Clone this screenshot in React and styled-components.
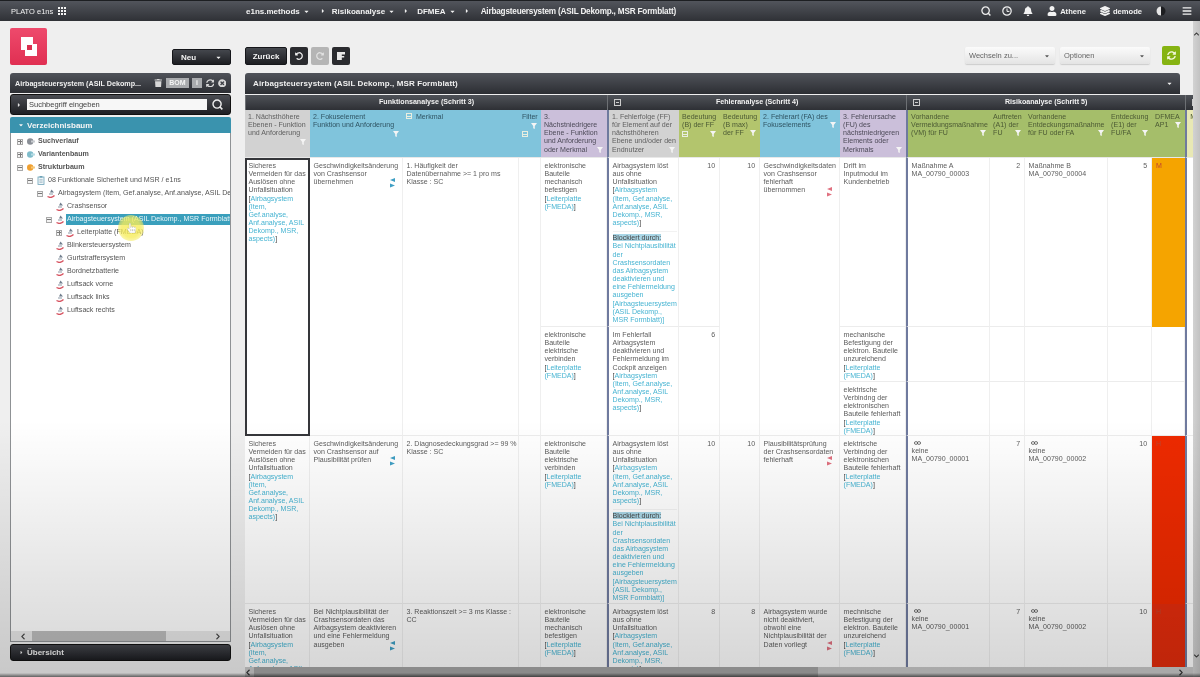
import React from 'react';
import styled, { createGlobalStyle } from 'styled-components';
import {
  FaBars, FaBell, FaCaretDown, FaCaretRight, FaChevronDown, FaChevronLeft, FaChevronRight, FaChevronUp,
  FaHandPointer, FaLayerGroup, FaRedoAlt, FaSyncAlt, FaTimesCircle, FaTrash, FaUndoAlt, FaUser,
} from 'react-icons/fa';

const GlobalStyle = createGlobalStyle`
  html, body { margin: 0; padding: 0; background: #eee; }
  body { font-family: "Liberation Sans", Arial, sans-serif; overflow: hidden; }
  * { box-sizing: border-box; }
`;

const darkGradient = 'linear-gradient(#50535a, #2c2e33)';

const Page = styled.div`
  position: relative;
  width: 1200px;
  height: 677px;
  overflow: hidden;
  display: flex;
  flex-direction: column;
  background: #efefef;
  filter: blur(0.35px);
  &::after {
    content: '';
    position: absolute;
    inset: 0;
    pointer-events: none;
    background: linear-gradient(transparent 62%, rgba(0, 0, 0, 0.16) 99.4%, rgba(0, 0, 0, 0.6) 100%);
  }
`;

/* top bar */
const TopBar = styled.header`
  height: 21px;
  flex: none;
  display: flex;
  align-items: center;
  padding: 0 8px 0 11px;
  border-top: 1px solid #1d1f22;
  background: linear-gradient(#52555c, #2f3136);
  color: #f2f2f2;
  font-size: 8px;
`;

const Brand = styled.div`
  display: flex;
  align-items: center;
  gap: 5px;
  width: 235px;
  font-size: 7.5px;
`;

const AppGrid = styled.span`
  display: grid;
  grid-template-columns: repeat(3, 2px);
  gap: 1px;
  i { height: 2px; background: #f4f4f4; }
`;

const Crumbs = styled.nav`
  display: flex;
  align-items: center;
  font-weight: bold;
  flex: 1;
`;

const Crumb = styled.span`
  display: flex;
  align-items: center;
  gap: 3px;
  margin-right: ${(p) => p.$gap}px;
  svg { width: 7px; height: 7px; }
`;

const CrumbSep = styled(FaCaretRight)`
  width: 6px;
  height: 6px;
  margin-right: ${(p) => p.$gap}px;
`;

const CrumbTitle = styled.span`
  font-size: 8.2px;
  letter-spacing: -0.19px;
`;

const TopIcons = styled.div`
  display: flex;
  align-items: center;
  font-weight: bold;
  font-size: 7.6px;
  svg { width: 10px; height: 10px; }
`;

const TopIcon = styled.span`
  display: flex;
  align-items: center;
  gap: 3px;
  margin-right: ${(p) => p.$gap}px;
`;

const Body = styled.div`
  flex: 1;
  display: flex;
  min-height: 0;
`;

const Content = styled.div`
  flex: 1;
  display: grid;
  grid-template-columns: 221px 948px;
  column-gap: 14px;
  padding-left: 10px;
  min-width: 0;
`;

const Column = styled.div`
  display: flex;
  flex-direction: column;
  min-width: 0;
`;

const Toolbar = styled.div`
  height: 52px;
  flex: none;
  display: flex;
  align-items: flex-end;
  justify-content: space-between;
  padding-bottom: 8px;
`;

const Logo = styled.svg`
  width: 37px;
  height: 37px;
  display: block;
`;

const DarkButton = styled.button`
  height: ${(p) => p.$h || 18}px;
  width: ${(p) => p.$w}px;
  display: flex;
  align-items: center;
  justify-content: ${(p) => (p.$between ? 'space-between' : 'center')};
  padding: ${(p) => (p.$between ? '0 8px' : '0')};
  border: 1px solid #15161a;
  border-radius: 2px;
  background: linear-gradient(#44474d, #1d1e22);
  color: #f4f4f4;
  font: bold 8px "Liberation Sans", Arial, sans-serif;
  svg { width: 7px; height: 7px; }
`;

const IconButton = styled.button`
  width: 18px;
  height: 18px;
  padding: 0;
  display: flex;
  align-items: center;
  justify-content: center;
  border: 0;
  border-radius: 2px;
  background: ${(p) => (p.$off ? '#b5b5b5' : '#2a2b2f')};
  color: ${(p) => (p.$off ? '#e2e2e2' : '#f2f2f2')};
  svg { width: 8px; height: 8px; }
`;

const ToolGroup = styled.div`
  display: flex;
  align-items: flex-end;
  gap: ${(p) => p.$gap}px;
  margin-right: ${(p) => p.$end || 0}px;
`;

const Dropdown = styled.div`
  width: 90px;
  height: 17px;
  display: flex;
  align-items: center;
  justify-content: space-between;
  padding: 0 5px 0 4px;
  margin-bottom: 1px;
  border-radius: 2px;
  background: linear-gradient(#fbfbfb, #e4e4e4);
  box-shadow: 0 1px 1px #ccc;
  color: #666;
  font-size: 7.5px;
  svg { width: 6px; height: 6px; color: #555; }
`;

const GreenButton = styled.button`
  width: 18px;
  height: 19px;
  margin-left: 7px;
  padding: 0;
  border: 0;
  border-radius: 2px;
  display: flex;
  align-items: center;
  justify-content: center;
  background: #86b312;
  color: #f4f8dc;
  svg { width: 9px; height: 9px; }
`;

/* left column */
const PanelHead = styled.div`
  height: ${(p) => p.$h}px;
  flex: none;
  display: flex;
  align-items: center;
  justify-content: space-between;
  padding: 0 5px;
  border-radius: 3px 3px 0 0;
  background: ${darkGradient};
  color: #f0f0f0;
  font-size: ${(p) => p.$size}px;
  font-weight: bold;
`;

const HeadTools = styled.div`
  display: flex;
  align-items: center;
  gap: 3.5px;
  svg { width: 8.5px; height: 8.5px; color: #d8d8d8; }
`;

const Tag = styled.span`
  display: inline-block;
  padding: 0 ${(p) => p.$pad}px;
  height: 10px;
  line-height: 10px;
  background: #a9abae;
  color: #f4f4f4;
  font-size: 7px;
`;

const SearchBar = styled.div`
  height: 21px;
  flex: none;
  margin-top: 1px;
  display: flex;
  align-items: center;
  padding: 0 7px 0 5px;
  gap: 5px;
  border-radius: 3px;
  border: 1px solid #111;
  background: linear-gradient(#4a4c52, #1f2024);
  color: #ddd;
  > svg:first-child { width: 6px; height: 6px; flex: none; }
`;

const SearchInput = styled.div`
  flex: 1;
  height: 11px;
  line-height: 11px;
  padding-left: 2px;
  background: #f7f7f7;
  color: #444;
  font-size: 7.5px;
`;

const Magnifier = styled.svg`
  width: ${(p) => p.$size}px;
  height: ${(p) => p.$size}px;
  flex: none;
`;

const TreeHead = styled.div`
  height: 16px;
  flex: none;
  margin-top: 2px;
  display: flex;
  align-items: center;
  gap: 3px;
  padding-left: 8px;
  border-radius: 2px 2px 0 0;
  background: #3a93ae;
  color: #f5f5f5;
  font-size: 8px;
  font-weight: bold;
  svg { width: 6px; height: 6px; }
`;

const Tree = styled.div`
  position: relative;
  height: 509px;
  flex: none;
  overflow: hidden;
  padding-top: 2px;
  border: 1px solid #8f9295;
  border-top: 0;
  background: #fff;
`;

const TreeRow = styled.div`
  height: 13px;
  display: flex;
  align-items: center;
  white-space: nowrap;
  padding-left: ${(p) => p.$indent}px;
  color: #555;
  font-size: 7.1px;
  font-weight: ${(p) => (p.$bold ? 'bold' : 'normal')};
`;

const Expander = styled.span`
  width: 6px;
  height: 6px;
  flex: none;
  margin-right: 4px;
  border: 1px solid #aaa;
  position: relative;
  background: #f3f3f3;
  &::before { content: ''; position: absolute; left: 0; right: 0; top: 1.5px; height: 1px; background: #777; }
  &::after {
    content: '';
    display: ${(p) => (p.$open ? 'none' : 'block')};
    position: absolute; top: 0; bottom: 0; left: 1.5px; width: 1px; background: #777;
  }
`;

const TreeIcon = styled.svg`
  width: 8px;
  height: 9px;
  flex: none;
  margin-right: 2px;
`;

const TreeLabel = styled.span`
  display: block;
  padding-left: 1px;
  flex: ${(p) => (p.$selected ? 1 : 'none')};
  height: 11px;
  line-height: 11px;
  overflow: hidden;
  background: ${(p) => (p.$selected ? '#3a9fbc' : 'transparent')};
  color: ${(p) => (p.$selected ? '#e9f5f8' : 'inherit')};
`;

const CursorMark = styled.div`
  position: absolute;
  left: 107px;
  top: 82px;
  width: 26px;
  height: 26px;
  display: flex;
  align-items: center;
  justify-content: center;
  border-radius: 50%;
  background: radial-gradient(rgba(246, 236, 90, 0.8) 50%, rgba(246, 236, 90, 0.1));
  color: #fff;
  svg { width: 9px; height: 10px; stroke: #777; stroke-width: 10px; }
`;

const TreeScroll = styled.div`
  position: absolute;
  left: 0;
  right: 0;
  bottom: 0;
  height: 10px;
  display: flex;
  align-items: center;
  justify-content: space-between;
  padding: 0 9px;
  background: #e8e8e8;
  color: #444;
  svg { width: 6px; height: 7px; }
`;

const TreeThumb = styled.div`
  position: absolute;
  left: 21px;
  width: 134px;
  top: 0;
  bottom: 0;
  background: #bcbcbc;
`;

const Overview = styled.div`
  height: 17px;
  flex: none;
  margin-top: 2px;
  display: flex;
  align-items: center;
  gap: 3px;
  padding-left: 8px;
  border-radius: 3px;
  border: 1px solid #111;
  background: linear-gradient(#45474d, #1c1d21);
  color: #f0f0f0;
  font-size: 8px;
  font-weight: bold;
  svg { width: 5px; height: 5px; }
`;

/* right column */
const MainHead = styled(PanelHead)`
  width: 935px;
  padding: 0 7px 0 8px;
  letter-spacing: 0.1px;
  svg { width: 7px; height: 7px; }
`;

const TableArea = styled.div`
  height: 572px;
  flex: none;
  margin-top: 1px;
  overflow: hidden;
`;

const Sheet = styled.table`
  width: 1000px;
  table-layout: fixed;
  border-collapse: separate;
  border-spacing: 0;
  font-size: 7.05px;
  line-height: 8.15px;
  color: #5c5c5c;
`;

const GroupCell = styled.th`
  height: 15px;
  position: relative;
  padding: 0;
  background: linear-gradient(#4f5258, #2e3035);
  border-left: 1px solid #6d7074;
  color: #f2f2f2;
  font-size: 7.1px;
  font-weight: bold;
  text-align: center;
`;

const GroupToggle = styled.span`
  position: absolute;
  left: 6px;
  top: 4px;
  width: 7px;
  height: 7px;
  border: 1px solid #ccc;
  &::before { content: ''; position: absolute; left: 1px; right: 1px; top: 2px; height: 1px; background: #ccc; }
`;

const headColors = {
  grey: '#d2d2d2',
  blue: '#80c4dc',
  violet: '#cbbfda',
  green: '#b3c56d',
  risk: '#a5be6a',
  pale: '#e8e8b4',
};

const headText = {
  grey: '#5f5f5f',
  blue: '#2f5463',
  violet: '#4d4a58',
  green: '#4c5a34',
  risk: '#4c5a34',
  pale: '#4c5a34',
};

const HeadCell = styled.th`
  height: 48px;
  padding: 3px 1px 0 3px;
  vertical-align: top;
  overflow: hidden;
  font-weight: normal;
  text-align: left;
  background: ${(p) => headColors[p.$tone]};
  border-bottom: 1px solid #e8e8e8;
  border-left: ${(p) => (p.$group ? '2px solid #6f7a9e' : '0')};
  color: ${(p) => headText[p.$tone]};
`;

const FilterMark = styled.div`
  display: flex;
  justify-content: ${(p) => (p.$start ? 'space-between' : 'flex-end')};
  align-items: center;
  padding-right: 3px;
  margin-top: ${(p) => (p.$overlap ? '-7px' : '2px')};
  svg { width: 6px; height: 6px; display: block; }
`;

const HeadToggle = styled.span`
  display: ${(p) => (p.$inline ? 'inline-block' : 'block')};
  margin-right: ${(p) => (p.$inline ? 4 : 0)}px;
  width: 6px;
  height: 6px;
  border: 1px solid #e9eee0;
  position: relative;
  &::before { content: ''; position: absolute; left: 0; right: 0; top: 1.5px; height: 1px; background: #e9eee0; }
`;

const Cell = styled.td`
  height: ${(p) => p.$h || 'auto'};
  padding: 4px 1px 0 3.5px;
  vertical-align: top;
  overflow: hidden;
  background: ${(p) => p.$bg || '#fff'};
  border-right: 1px solid #efefef;
  border-bottom: 1px solid #ececec;
  border-left: ${(p) => (p.$group ? '2px solid #6f7a9e' : '0')};
  text-align: ${(p) => (p.$num ? 'right' : 'left')};
  padding-right: ${(p) => (p.$num ? '4px' : '1px')};
  ${(p) => p.$focus && 'outline: 2px solid #35363a; outline-offset: -2px;'}
  ${(p) => p.$rate && 'border: 0; color: #c2452e; padding-left: 4px;'}
`;

const Ref = styled.span`
  color: #47b4d2;
`;

const Bracket = styled.span`
  color: #444;
`;

const BlockedBy = styled.div`
  margin-top: 4px;
  padding-top: 2px;
  border-top: 1px solid #f2f2f2;
  mark { background: #a9d6e6; color: #444; }
`;

const Pager = styled.svg`
  display: block;
  width: 5px;
  height: 10px;
  margin: -8px 6px 0 auto;
`;

const LinkMark = styled.svg`
  display: block;
  width: 7px;
  height: 4px;
  margin: 1px 0 2px 2px;
`;

const HScroll = styled.div`
  height: 10px;
  flex: none;
  position: relative;
  display: flex;
  align-items: center;
  justify-content: space-between;
  padding: 0 9px 0 0;
  background: #c9c9c9;
  color: #333;
  svg { width: 6px; height: 7px; }
`;

const HThumb = styled.div`
  position: absolute;
  left: 9px;
  width: 564px;
  top: 0;
  bottom: 0;
  background: #a5a5a5;
`;

const VScroll = styled.div`
  width: 7px;
  flex: none;
  display: flex;
  flex-direction: column;
  justify-content: space-between;
  align-items: center;
  padding: 10px 0 18px;
  background: linear-gradient(90deg, #d2d2d2, #c2c2c2);
  color: #333;
  svg { width: 7px; height: 6px; }
`;

const Funnel = () => (
  <svg viewBox="0 0 10 10"><path d="M0 0h10L6.3 5v5L3.7 8.6V5z" fill="#f5f5f5" /></svg>
);

const PartIcon = () => (
  <TreeIcon viewBox="0 0 8 9">
    <path d="M4.5 0.5 7 3.5H3z" fill="#6f7d8c" />
    <path d="M0.5 7.5c2 1.2 5 1 7-1" stroke="#d6515e" strokeWidth="1.3" fill="none" />
    <path d="M2 5h4" stroke="#8c99a6" strokeWidth="1" />
  </TreeIcon>
);

const RoundIcon = ({ color, tip }) => (
  <TreeIcon viewBox="0 0 8 9">
    <circle cx="3.2" cy="4.5" r="3.2" fill={color} />
    <rect x="4" y="3.5" width="4" height="2" fill={tip} />
  </TreeIcon>
);

const SheetIcon = () => (
  <TreeIcon viewBox="0 0 8 9">
    <rect x="1" y="1" width="6" height="7.5" fill="#eef5f8" stroke="#6ea3b8" strokeWidth="0.8" />
    <rect x="2.6" y="0" width="2.8" height="1.6" fill="#6ea3b8" />
    <path d="M2.4 3.6h3.2M2.4 5h3.2M2.4 6.4h3.2" stroke="#7a9aa8" strokeWidth="0.5" />
  </TreeIcon>
);

const SearchGlyph = ({ size }) => (
  <Magnifier $size={size} viewBox="0 0 10 10">
    <circle cx="4.6" cy="4.6" r="3.7" fill="none" stroke="#eee" strokeWidth="1.3" />
    <path d="M7.3 7.3 9.4 9.4" stroke="#eee" strokeWidth="1.4" />
  </Magnifier>
);

const Arrows = ({ color }) => (
  <Pager viewBox="0 0 5 10">
    <path d="M5 0v4L0 2z" fill={color} />
    <path d="M0 5.5v4l5-2z" fill={color} />
  </Pager>
);

const Chain = () => (
  <LinkMark viewBox="0 0 7 4">
    <ellipse cx="2" cy="2" rx="1.6" ry="1.4" fill="none" stroke="#555" strokeWidth="0.8" />
    <ellipse cx="5" cy="2" rx="1.6" ry="1.4" fill="none" stroke="#555" strokeWidth="0.8" />
  </LinkMark>
);

const Filter = ({ overlap, toggle }) => (
  <FilterMark $overlap={overlap} $start={toggle}>
    {toggle && <HeadToggle />}
    <Funnel />
  </FilterMark>
);

const SystemRef = ({ narrow }) => (
  <>
    <br />
    <Bracket>[</Bracket>
    <Ref>Airbagsystem {narrow && <br />}(Item, {narrow && <br />}Gef.analyse, Anf.analyse, ASIL Dekomp., MSR, aspects)</Ref>
    <Bracket>]</Bracket>
  </>
);

const BoardRef = () => (
  <>
    <br />
    <Bracket>[</Bracket><Ref>Leiterplatte (FMEDA)</Ref><Bracket>]</Bracket>
  </>
);

const Blocked = () => (
  <BlockedBy>
    <mark>Blockiert durch:</mark>
    <br />
    <Ref>
      Bei Nichtplausibilität der Crashsensordaten das Airbagsystem deaktivieren und eine Fehlermeldung ausgeben
      <br />
      [Airbagsteuersystem (ASIL Dekomp., MSR Formblatt)]
    </Ref>
  </BlockedBy>
);

const treeRows = [
  { text: 'Suchverlauf', indent: 6, bold: true, box: 'closed', icon: <RoundIcon color="#8a8f96" tip="#c8ccd0" /> },
  { text: 'Variantenbaum', indent: 6, bold: true, box: 'closed', icon: <RoundIcon color="#7fbccb" tip="#b5dbe4" /> },
  { text: 'Strukturbaum', indent: 6, bold: true, box: 'open', icon: <RoundIcon color="#f0a030" tip="#f6c878" /> },
  { text: '08 Funktionale Sicherheit und MSR / e1ns', indent: 16, box: 'open', icon: <SheetIcon /> },
  { text: 'Airbagsystem (Item, Gef.analyse, Anf.analyse, ASIL Dekomp., MSR, aspects)', indent: 26, box: 'open', icon: <PartIcon /> },
  { text: 'Crashsensor', indent: 45, icon: <PartIcon /> },
  { text: 'Airbagsteuersystem (ASIL Dekomp., MSR Formblatt)', indent: 35, box: 'open', icon: <PartIcon />, selected: true },
  { text: 'Leiterplatte (FMEDA)', indent: 45, box: 'closed', icon: <PartIcon /> },
  { text: 'Blinkersteuersystem', indent: 45, icon: <PartIcon /> },
  { text: 'Gurtstraffersystem', indent: 45, icon: <PartIcon /> },
  { text: 'Bordnetzbatterie', indent: 45, icon: <PartIcon /> },
  { text: 'Luftsack vorne', indent: 45, icon: <PartIcon /> },
  { text: 'Luftsack links', indent: 45, icon: <PartIcon /> },
  { text: 'Luftsack rechts', indent: 45, icon: <PartIcon /> },
];

const columns = [65, 93, 116, 22, 66, 72, 41, 40, 80, 66, 84, 35, 83, 44, 33, 60];

export default function App() {
  return (
    <>
      <GlobalStyle />
      <Page>
        <TopBar>
          <Brand>
            PLATO e1ns
            <AppGrid>{Array.from({ length: 9 }, (_, i) => <i key={i} />)}</AppGrid>
          </Brand>
          <Crumbs>
            <Crumb $gap={10}>e1ns.methods <FaCaretDown /></Crumb>
            <CrumbSep $gap={6} />
            <Crumb $gap={8}>Risikoanalyse <FaCaretDown /></Crumb>
            <CrumbSep $gap={8} />
            <Crumb $gap={8}>DFMEA <FaCaretDown /></Crumb>
            <CrumbSep $gap={11} />
            <CrumbTitle>Airbagsteuersystem (ASIL Dekomp., MSR Formblatt)</CrumbTitle>
          </Crumbs>
          <TopIcons>
            <TopIcon $gap={11}><SearchGlyph size={10} /></TopIcon>
            <TopIcon $gap={11}>
              <svg viewBox="0 0 10 10"><circle cx="5" cy="5" r="4.2" fill="none" stroke="#f2f2f2" strokeWidth="1.2" /><path d="M5 2.5V5.4H7.4" fill="none" stroke="#f2f2f2" strokeWidth="1" /></svg>
            </TopIcon>
            <TopIcon $gap={14}><FaBell /></TopIcon>
            <TopIcon $gap={14}><FaUser />Athene</TopIcon>
            <TopIcon $gap={14}><FaLayerGroup />demode</TopIcon>
            <TopIcon $gap={16}>
              <svg viewBox="0 0 10 10"><circle cx="5" cy="5" r="4.5" fill="#1d1e21" /><path d="M5 .5a4.5 4.5 0 0 0 0 9z" fill="#e6e6e6" /></svg>
            </TopIcon>
            <FaBars />
          </TopIcons>
        </TopBar>

        <Body>
          <Content>
            <Column>
              <Toolbar>
                <Logo viewBox="0 0 37 37">
                  <defs>
                    <linearGradient id="logoFill" x1="0" y1="0" x2="0" y2="1">
                      <stop offset="0" stopColor="#ee4a6c" />
                      <stop offset="1" stopColor="#e02f52" />
                    </linearGradient>
                  </defs>
                  <rect width="37" height="37" rx="2" fill="url(#logoFill)" />
                  <rect x="11" y="9" width="12" height="13" fill="#fff" />
                  <rect x="15" y="16" width="12" height="12" fill="#fff" />
                  <rect x="17" y="17" width="5" height="5" fill="#d9304f" />
                </Logo>
                <DarkButton $w={59} $h={16} $between>Neu <FaCaretDown /></DarkButton>
              </Toolbar>

              <PanelHead $h={20} $size={7.2}>
                Airbagsteuersystem (ASIL Dekomp...
                <HeadTools>
                  <FaTrash />
                  <Tag $pad={3}>BOM</Tag>
                  <Tag $pad={4}>i</Tag>
                  <FaSyncAlt />
                  <FaTimesCircle />
                </HeadTools>
              </PanelHead>
              <SearchBar>
                <FaCaretRight />
                <SearchInput>Suchbegriff eingeben</SearchInput>
                <SearchGlyph size={11} />
              </SearchBar>
              <TreeHead><FaCaretDown /> Verzeichnisbaum</TreeHead>
              <Tree>
                {treeRows.map((row) => (
                  <TreeRow key={row.text} $indent={row.indent} $bold={row.bold}>
                    {row.box && <Expander $open={row.box === 'open'} />}
                    {row.icon}
                    <TreeLabel $selected={row.selected}>{row.text}</TreeLabel>
                  </TreeRow>
                ))}
                <CursorMark><FaHandPointer /></CursorMark>
                <TreeScroll>
                  <TreeThumb />
                  <FaChevronLeft />
                  <FaChevronRight />
                </TreeScroll>
              </Tree>
              <Overview><FaCaretRight /> Übersicht</Overview>
            </Column>

            <Column>
              <Toolbar>
                <ToolGroup $gap={3}>
                  <DarkButton $w={42}>Zurück</DarkButton>
                  <IconButton><FaUndoAlt /></IconButton>
                  <IconButton $off><FaRedoAlt /></IconButton>
                  <IconButton>
                    <svg viewBox="0 0 10 10"><path d="M0 0h10v3H6v2h3v2H6v3H0z" fill="#e8e8e8" /></svg>
                  </IconButton>
                </ToolGroup>
                <ToolGroup $gap={5} $end={13}>
                  <Dropdown>Wechseln zu... <FaCaretDown /></Dropdown>
                  <Dropdown>Optionen <FaCaretDown /></Dropdown>
                  <GreenButton><FaSyncAlt /></GreenButton>
                </ToolGroup>
              </Toolbar>

              <MainHead $h={21} $size={8}>
                Airbagsteuersystem (ASIL Dekomp., MSR Formblatt)
                <FaCaretDown />
              </MainHead>
              <TableArea>
                <Sheet>
                  <colgroup>{columns.map((w, i) => <col key={i} width={w} />)}</colgroup>
                  <thead>
                    <tr>
                      <GroupCell colSpan={5}>Funktionsanalyse (Schritt 3)</GroupCell>
                      <GroupCell colSpan={5}><GroupToggle />Fehleranalyse (Schritt 4)</GroupCell>
                      <GroupCell colSpan={5}><GroupToggle />Risikoanalyse (Schritt 5)</GroupCell>
                      <GroupCell><GroupToggle /></GroupCell>
                    </tr>
                    <tr>
                      <HeadCell $tone="grey">1. Nächsthöhere Ebenen - Funktion und Anforderung<Filter /></HeadCell>
                      <HeadCell $tone="blue">2. Fokuselement<br />Funktion und Anforderung<Filter /></HeadCell>
                      <HeadCell $tone="blue"><HeadToggle $inline />Merkmal</HeadCell>
                      <HeadCell $tone="blue">Filter<Filter /><FilterMark $start><HeadToggle /></FilterMark></HeadCell>
                      <HeadCell $tone="violet">3.<br />Nächstniedrigere Ebene - Funktion und Anforderung oder Merkmal<Filter overlap /></HeadCell>
                      <HeadCell $tone="grey" $group>1. Fehlerfolge (FF) für Element auf der nächsthöheren Ebene und/oder den Endnutzer<Filter overlap /></HeadCell>
                      <HeadCell $tone="green">Bedeutung (B) der FF<Filter toggle /></HeadCell>
                      <HeadCell $tone="green">Bedeutung (B max) der FF<Filter overlap /></HeadCell>
                      <HeadCell $tone="blue">2. Fehlerart (FA) des Fokuselements<Filter overlap /></HeadCell>
                      <HeadCell $tone="violet">3. Fehlerursache (FU) des nächstniedrigeren Elements oder Merkmals<Filter overlap /></HeadCell>
                      <HeadCell $tone="risk" $group>Vorhandene Vermeidungsmaßnahme (VM) für FU<Filter overlap /></HeadCell>
                      <HeadCell $tone="risk">Auftreten (A1) der FU<Filter overlap /></HeadCell>
                      <HeadCell $tone="risk">Vorhandene Entdeckungsmaßnahme für FU oder FA<Filter overlap /></HeadCell>
                      <HeadCell $tone="risk">Entdeckung (E1) der FU/FA<Filter overlap /></HeadCell>
                      <HeadCell $tone="risk">DFMEA AP1<Filter overlap /></HeadCell>
                      <HeadCell $tone="pale" $group>M (D</HeadCell>
                    </tr>
                  </thead>
                  <tbody>
                    <tr>
                      <Cell rowSpan={3} $focus>Sicheres Vermeiden für das Auslösen ohne Unfallsituation <SystemRef narrow /></Cell>
                      <Cell rowSpan={3}>Geschwindigkeitsänderung von Crashsensor übernehmen<Arrows color="#3f9fc4" /></Cell>
                      <Cell rowSpan={3}>1. Häufigkeit der<br />Datenübernahme &gt;= 1 pro ms<br />Klasse : SC</Cell>
                      <Cell rowSpan={3} />
                      <Cell>elektronische Bauteile mechanisch befestigen<BoardRef /></Cell>
                      <Cell $group $h="169px">Airbagsystem löst aus ohne Unfallsituation <SystemRef /><Blocked /></Cell>
                      <Cell $num>10</Cell>
                      <Cell rowSpan={3} $num>10</Cell>
                      <Cell rowSpan={3}>Geschwindigkeitsdaten<br />von Crashsensor<br />fehlerhaft<br />übernommen<Arrows color="#e0707f" /></Cell>
                      <Cell>Drift im<br />Inputmodul im<br />Kundenbetrieb</Cell>
                      <Cell $group>Maßnahme A<br />MA_00790_00003</Cell>
                      <Cell $num>2</Cell>
                      <Cell>Maßnahme B<br />MA_00790_00004</Cell>
                      <Cell $num>5</Cell>
                      <Cell $rate $bg="#f5a400">M</Cell>
                      <Cell rowSpan={3} $group />
                    </tr>
                    <tr>
                      <Cell rowSpan={2}>elektronische Bauteile elektrische verbinden<BoardRef /></Cell>
                      <Cell rowSpan={2} $group>Im Fehlerfall Airbagsystem deaktivieren und Fehlermeldung im Cockpit anzeigen <SystemRef /></Cell>
                      <Cell rowSpan={2} $num>6</Cell>
                      <Cell $h="55px">mechanische Befestigung der elektron. Bauteile unzureichend<BoardRef /></Cell>
                      <Cell $group />
                      <Cell />
                      <Cell />
                      <Cell />
                      <Cell />
                    </tr>
                    <tr>
                      <Cell $h="54px">elektrische<br />Verbindng der elektronischen Bauteile fehlerhaft<BoardRef /></Cell>
                      <Cell $group />
                      <Cell />
                      <Cell />
                      <Cell />
                      <Cell />
                    </tr>
                    <tr>
                      <Cell>Sicheres Vermeiden für das Auslösen ohne Unfallsituation <SystemRef narrow /></Cell>
                      <Cell>Geschwindigkeitsänderung von Crashsensor auf Plausibilität prüfen<Arrows color="#3f9fc4" /></Cell>
                      <Cell>2. Diagnosedeckungsgrad &gt;= 99 %<br />Klasse : SC</Cell>
                      <Cell />
                      <Cell>elektronische Bauteile elektrische verbinden<BoardRef /></Cell>
                      <Cell $group $h="168px">Airbagsystem löst aus ohne Unfallsituation <SystemRef /><Blocked /></Cell>
                      <Cell $num>10</Cell>
                      <Cell $num>10</Cell>
                      <Cell>Plausibilitätsprüfung der Crashsensordaten fehlerhaft<Arrows color="#e0707f" /></Cell>
                      <Cell>elektrische<br />Verbindng der elektronischen Bauteile fehlerhaft<BoardRef /></Cell>
                      <Cell $group><Chain />keine<br />MA_00790_00001</Cell>
                      <Cell $num>7</Cell>
                      <Cell><Chain />keine<br />MA_00790_00002</Cell>
                      <Cell $num>10</Cell>
                      <Cell $rate $bg="#ee2a00">H</Cell>
                      <Cell $group />
                    </tr>
                    <tr>
                      <Cell>Sicheres Vermeiden für das Auslösen ohne Unfallsituation <SystemRef narrow /></Cell>
                      <Cell>Bei Nichtplausibilität der Crashsensordaten das Airbagsystem deaktivieren und eine Fehlermeldung ausgeben<Arrows color="#3f9fc4" /></Cell>
                      <Cell>3. Reaktionszeit &gt;= 3 ms Klasse : CC</Cell>
                      <Cell />
                      <Cell>elektronische Bauteile mechanisch befestigen<BoardRef /></Cell>
                      <Cell $group>Airbagsystem löst aus ohne Unfallsituation <SystemRef /><Blocked /></Cell>
                      <Cell $num>8</Cell>
                      <Cell $num>8</Cell>
                      <Cell>Airbagsystem wurde nicht deaktiviert, obwohl eine Nichtplausibilität der Daten vorliegt<Arrows color="#e0707f" /></Cell>
                      <Cell>mechnische Befestigung der elektron. Bauteile unzureichend<BoardRef /></Cell>
                      <Cell $group><Chain />keine<br />MA_00790_00001</Cell>
                      <Cell $num>7</Cell>
                      <Cell><Chain />keine<br />MA_00790_00002</Cell>
                      <Cell $num>10</Cell>
                      <Cell $rate $bg="#e32c0c">H</Cell>
                      <Cell $group />
                    </tr>
                  </tbody>
                </Sheet>
              </TableArea>
              <HScroll>
                <HThumb />
                <FaChevronLeft />
                <FaChevronRight />
              </HScroll>
            </Column>
          </Content>
          <VScroll>
            <FaChevronUp />
            <FaChevronDown />
          </VScroll>
        </Body>
      </Page>
    </>
  );
}
